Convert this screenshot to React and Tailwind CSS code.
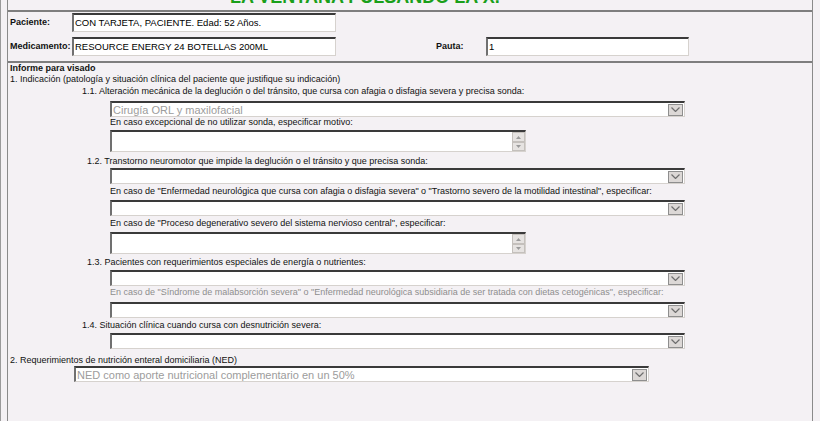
import React from "react";

const font = { fontFamily: '"Liberation Sans", Arial, sans-serif' };

const Chevron = () => (
  <svg width="9" height="5" viewBox="0 0 9 5">
    <path d="M0.5 0.5 L4.5 4.5 L8.5 0.5" fill="none" stroke="#6e6e6e" strokeWidth="1.2" />
  </svg>
);

const Tiny = ({ up }) => (
  <svg width="5" height="3" viewBox="0 0 5 3">
    {up ? <path d="M0 3 L2.5 0 L5 3 Z" fill="#9a9a9a" /> : <path d="M0 0 L2.5 3 L5 0 Z" fill="#9a9a9a" />}
  </svg>
);

const Combo = ({ value, className = "" }) => (
  <div
    className={`flex h-[16px] w-[575px] items-center border-t-2 border-l-2 border-r border-b border-t-[#3a3a3a] border-l-[#707070] border-r-[#d6d2ce] border-b-[#d6d2ce] bg-white ${className}`}
  >
    <span className="flex-1 truncate pl-[1px] text-[11px] leading-[12px] text-[#9c9c9c]">{value}</span>
    <span className="mr-[1px] flex h-[12px] w-[15px] items-center justify-center border border-[#8e8e8e] bg-[#dcd8d6]">
      <Chevron />
    </span>
  </div>
);

const Memo = ({ className = "" }) => (
  <div
    className={`flex h-[22px] w-[416px] border-t-2 border-l-2 border-r border-b border-t-[#3a3a3a] border-l-[#707070] border-r-[#d6d2ce] border-b-[#d6d2ce] bg-white ${className}`}
  >
    <div className="flex-1" />
    <div className="flex w-[13px] flex-col">
      <span className="flex h-[10px] items-center justify-center border border-[#c4c0bc] bg-[#e6e3e1]">
        <Tiny up />
      </span>
      <span className="flex h-[9px] items-center justify-center border border-[#c4c0bc] bg-[#e6e3e1]">
        <Tiny />
      </span>
    </div>
  </div>
);

const Field = ({ value, className = "" }) => (
  <div
    className={`flex h-[19px] items-center border-t-2 border-l-2 border-r border-b border-t-[#3a3a3a] border-l-[#707070] border-r-[#d6d2ce] border-b-[#d6d2ce] bg-white pl-[1px] text-[9.5px] leading-[10px] text-black ${className}`}
  >
    {value}
  </div>
);

const Label = ({ children, className = "" }) => (
  <div className={`text-[9px] leading-[11px] text-[#111] ${className}`}>{children}</div>
);

export default function App() {
  return (
    <div style={font} className="h-[421px] w-[820px] overflow-hidden border-l border-[#9a9a9a] bg-[#f4f1f4]">
      <div className="ml-[6px] flex h-full w-[806px] flex-col border-x border-[#8a8a8a]">
        <div className="h-[10px] overflow-hidden">
          <div className="mt-[-12px] pl-[222px] text-[18px] font-bold leading-[18px] text-[#1a9f1a]">
            LA VENTANA PULSANDO LA X.
          </div>
        </div>
        <div className="h-[2px] bg-[#7e7e7e]" />

        <div className="mt-[1px] flex items-center pl-[2px]">
          <Label className="w-[62px] font-bold">Paciente:</Label>
          <Field value="CON TARJETA, PACIENTE. Edad: 52 Años." className="w-[264px]" />
        </div>
        <div className="mt-[5px] flex items-center pl-[2px]">
          <Label className="w-[62px] font-bold">Medicamento:</Label>
          <Field value="RESOURCE ENERGY 24 BOTELLAS 200ML" className="w-[264px]" />
          <Label className="ml-[100px] w-[50px] font-bold">Pauta:</Label>
          <Field value="1" className="w-[203px]" />
        </div>
        <div className="mt-[5px] h-[2px] bg-[#7e7e7e]" />

        <div className="flex flex-col pl-[2px]">
          <div className="text-[9px] font-bold leading-[11px] text-[#111]">Informe para visado</div>
          <Label>1. Indicación (patología y situación clínica del paciente que justifique su indicación)</Label>

          <Label className="mt-[1px] pl-[72px]">
            1.1. Alteración mecánica de la deglución o del tránsito, que cursa con afagia o disfagia severa y precisa sonda:
          </Label>
          <Combo value="Cirugía ORL y maxilofacial" className="ml-[100px] mt-[4px]" />
          <Label className="pl-[100px]">En caso excepcional de no utilizar sonda, especificar motivo:</Label>
          <Memo className="ml-[100px] mt-[2px]" />

          <Label className="mt-[4px] pl-[77px]">
            1.2. Transtorno neuromotor que impide la deglución o el tránsito y que precisa sonda:
          </Label>
          <Combo className="ml-[100px] mt-[1px]" />
          <Label className="mt-[2px] pl-[100px]">
            En caso de "Enfermedad neurológica que cursa con afagia o disfagia severa" o "Trastorno severo de la motilidad intestinal", especificar:
          </Label>
          <Combo className="ml-[100px] mt-[3px]" />
          <Label className="mt-[2px] pl-[100px]">
            En caso de "Proceso degenerativo severo del sistema nervioso central", especificar:
          </Label>
          <Memo className="ml-[100px] mt-[3px]" />

          <Label className="mt-[3px] pl-[77px]">1.3. Pacientes con requerimientos especiales de energía o nutrientes:</Label>
          <Combo className="ml-[100px] mt-[2px]" />
          <Label className="mt-[1px] pl-[100px] !text-[#8e8e8e]">
            En caso de "Síndrome de malabsorción severa" o "Enfermedad neurológica subsidiaria de ser tratada con dietas cetogénicas", especificar:
          </Label>
          <Combo className="ml-[100px] mt-[4px]" />

          <Label className="mt-[2px] pl-[72px]">1.4. Situación clínica cuando cursa con desnutrición severa:</Label>
          <Combo className="ml-[100px] mt-[2px]" />

          <Label className="mt-[6px]">2. Requerimientos de nutrición enteral domiciliaria (NED)</Label>
          <Combo value="NED como aporte nutricional complementario en un 50%" className="ml-[64px]" />
        </div>
      </div>
    </div>
  );
}
